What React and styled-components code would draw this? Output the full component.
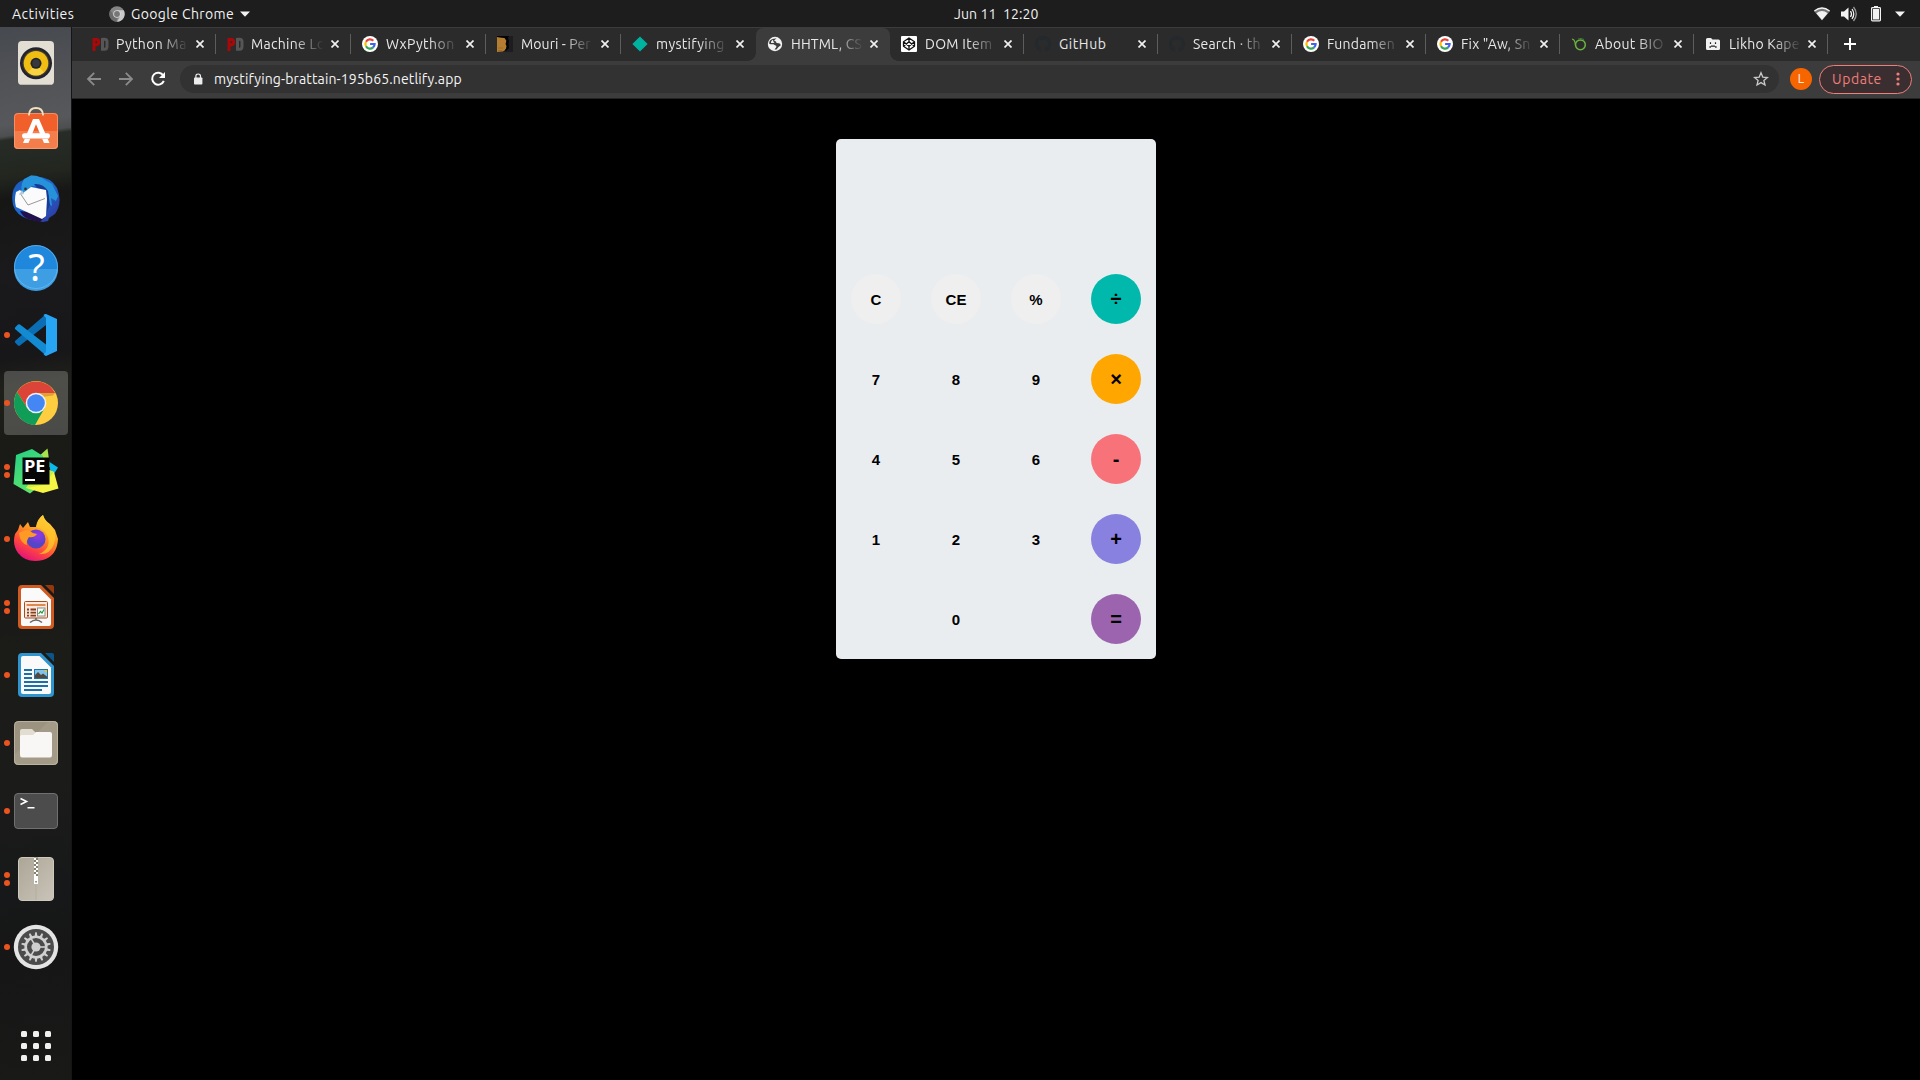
import React from "react";
import styled, { createGlobalStyle } from "styled-components";

const GlobalStyle = createGlobalStyle`
  * { box-sizing: border-box; }
  body { margin: 0; background: #000; overflow: hidden; }
  svg { display: block; flex: none; }
`;

const Desktop = styled.div`
  width: 1920px;
  height: 1080px;
  display: flex;
  flex-direction: column;
  background: #000;
  color: #f2f2f2;
  font-family: Ubuntu, "Noto Sans", sans-serif;
  font-size: 14px;
`;

/* ---------- top panel ---------- */
const TopPanel = styled.header`
  height: 27px;
  flex: none;
  display: grid;
  grid-template-columns: 942px auto 1fr;
  align-items: center;
  padding: 0 15px 0 12px;
  background: #1d1d1d;
`;
const PanelGroup = styled.div`
  display: flex;
  align-items: center;
  justify-content: ${(p) => (p.$end ? "flex-end" : "flex-start")};
`;
const PanelText = styled.span`
  width: ${(p) => p.$w}px;
  white-space: pre;
  line-height: 26px;
  letter-spacing: ${(p) => p.$ls || 0}px;
`;
const AppMenu = styled.div`
  display: flex;
  align-items: center;
  margin-left: 35px;
  gap: 6px;
`;
const StatusIcons = styled(PanelGroup)`
  gap: 10.67px;
`;

/* ---------- body ---------- */
const Body = styled.div`
  flex: 1;
  display: flex;
  min-height: 0;
`;
const Dock = styled.nav`
  width: 72px;
  flex: none;
  display: flex;
  flex-direction: column;
  padding: 4px 0 0 4px;
  border-right: 1px solid #151515;
  background:
    linear-gradient(172deg, #46494f 0, #505256 50px, #57585b 98px, #4c4e4f 109px, #282c27 113px, #22261f 150px, #161615 172px, #1a1a1c 240px, #171719 330px, #20201a 360px, #1a1a17 410px, #191918 560px, #1b1b18 620px, #1b1b1a 760px, #171819 860px, #161616 930px, #191918 1053px);
`;
const DockTile = styled.div`
  width: 64px;
  height: 64px;
  margin: 0 0 4px;
  flex: none;
  display: flex;
  align-items: center;
  gap: 2px;
  border-radius: 4px;
  background: ${(p) => (p.$active ? "rgba(255,255,255,0.21)" : "transparent")};
`;
const DockDots = styled.div`
  width: 6px;
  display: flex;
  flex-direction: column;
  gap: 2.5px;
`;
const DockDot = styled.i`
  width: 6px;
  height: 6px;
  border-radius: 50%;
  background: #e95420;
`;
const AppGrid = styled.div`
  display: grid;
  grid-template-columns: repeat(3, 6px);
  gap: 6px;
  margin: 48px 0 0 17px;
`;
const AppGridCell = styled.i`
  height: 6px;
  border-radius: 1.5px;
  background: #f1f1f0;
`;

/* ---------- browser ---------- */
const Browser = styled.main`
  flex: 1;
  display: flex;
  flex-direction: column;
  min-width: 0;
`;
const TabStrip = styled.div`
  height: 34px;
  flex: none;
  display: flex;
  padding-left: 9px;
  border-top: 1px solid #3c3c3c;
  background: #2b2b2b;
`;
const Tab = styled.div`
  width: ${(p) => p.$w}px;
  flex: none;
  display: flex;
  align-items: center;
  padding: 0 0 1px 11px;
  background: ${(p) => (p.$active ? "#3c3c3c" : "transparent")};
  border-radius: ${(p) => (p.$active ? "7px 7px 0 0" : "0")};
`;
const TabCorner = styled.i`
  align-self: flex-end;
  width: 8px;
  height: 8px;
  flex: none;
  margin-bottom: -1px;
  ${(p) =>
    p.$right
      ? "margin-left: auto; margin-right: -8px; background: radial-gradient(circle at 100% 0, transparent 7.5px, #3c3c3c 8px);"
      : "margin-left: -19px; margin-right: 11px; background: radial-gradient(circle at 0 0, transparent 7.5px, #3c3c3c 8px);"}
`;
const Favicon = styled.span`
  width: 16px;
  height: 16px;
  flex: none;
`;
const TabTitle = styled.span`
  width: 74px;
  margin-left: 8px;
  flex: none;
  white-space: nowrap;
  line-height: 20px;
  color: #e8e8e8;
  letter-spacing: ${(p) => p.$ls ?? 0.35}px;
  mask-image: ${(p) => (p.$full ? "none" : "linear-gradient(90deg, #000 58%, transparent 98%)")};
`;
const TabClose = styled.span`
  margin-left: ${(p) => (p.$tight ? 5 : 6)}px;
`;
const TabRule = styled.i`
  width: 1px;
  height: 20px;
  margin-left: auto;
  background: ${(p) => (p.$hidden ? "transparent" : "#5d5d5d")};
`;
const NewTab = styled.div`
  display: flex;
  align-items: center;
  padding: 0 0 1px 16px;
`;
const Toolbar = styled.div`
  height: 38px;
  flex: none;
  display: flex;
  align-items: center;
  padding: 0 8px 1px 14px;
  background: #3c3c3c;
  border-bottom: 1px solid #242424;
`;
const NavButton = styled.span`
  width: 16px;
  margin-right: 16px;
`;
const Omnibox = styled.div`
  flex: 1;
  height: 28px;
  margin-left: -2px;
  display: flex;
  align-items: center;
  padding: 0 10px 0 13px;
  border-radius: 14px;
  background: #323232;
`;
const Address = styled.span`
  flex: 1;
  margin-left: 11px;
  line-height: 28px;
  color: #f5f5f5;
  letter-spacing: 0.14px;
`;
const Avatar = styled.span`
  width: 22px;
  height: 22px;
  margin: 0 7px 0 11px;
  border-radius: 50%;
  background: #f66500;
  color: #ffe9dc;
  font: 12px/22px Roboto, sans-serif;
  text-align: center;
`;
const UpdateButton = styled.div`
  width: 93px;
  height: 29px;
  display: flex;
  align-items: center;
  justify-content: space-between;
  padding: 0 11px 0 12px;
  border: 1px solid #ee7f79;
  border-radius: 15px;
  background: #3b2e31;
  color: #ee7f79;
  letter-spacing: 0.6px;
`;

/* ---------- calculator ---------- */
const Page = styled.section`
  flex: 1;
  display: flex;
  justify-content: center;
  align-items: flex-start;
  padding-top: 40px;
  background: #000;
`;
const Calculator = styled.div`
  width: 320px;
  height: 520px;
  border-radius: 5px;
  background: #e9edf0;
  overflow: hidden;
`;
const Display = styled.div`
  height: 120px;
`;
const Keypad = styled.div`
  display: grid;
  grid-template-columns: repeat(4, 50px);
  gap: 30px;
  padding: 15px;
`;
const Key = styled.button`
  width: 50px;
  height: 50px;
  padding: 0;
  border: 0;
  border-radius: 50%;
  background: ${(p) => p.$bg || "transparent"};
  color: #000;
  font: bold ${(p) => (p.$op ? 20 : 15)}px "Liberation Sans", Arial, sans-serif;
`;

/* ---------- small icons ---------- */
const CloseIcon = () => (
  <svg width="8" height="8" viewBox="0 0 8 8" stroke="#f0f0f0" strokeWidth="1.7"><path d="M.5.5l7 7M7.5.5l-7 7" /></svg>
);
const GoogleIcon = () => (
  <svg width="16" height="16" viewBox="0 0 16 16" fill="none" strokeWidth="2.2">
    <circle cx="8" cy="8" r="8" fill="#fff" />
    <path d="M4 5.7A4.6 4.6 0 0 1 11.3 4.8" stroke="#ea4335" />
    <path d="M4 10.3A4.8 4.8 0 0 1 4 5.7" stroke="#fbbc05" />
    <path d="M11.1 11.4A4.6 4.6 0 0 1 4 10.3" stroke="#34a853" />
    <path d="M8.1 8H12.6A4.6 4.6 0 0 1 11.1 11.4" stroke="#4263eb" />
  </svg>
);
const PDIcon = () => (
  <svg width="17" height="16" viewBox="0 0 17 16" fill="none" strokeWidth="3">
    <path d="M2 15V3.5H4.7Q6.7 3.5 6.7 6T4.7 8.8H2" stroke="#a80808" />
    <path d="M10.5 2V13.2H12.5Q15 13.2 15 10.5V5.700Q15 3.300 12.500 3.300H10.500" stroke="#565656" />
  </svg>
);
const WoodIcon = () => (
  <svg width="16" height="16" viewBox="0 0 16 16">
    <rect width="16" height="16" fill="#1c1c21" />
    <path d="M0 1L6 1.500L9 1L10 4L9 6L10.500 9L9 11L9.500 13L6 15.500L0 16Z" fill="#b47d31" />
    <path d="M1 12H6M1 14.500H5" stroke="#a06c27" />
    <path d="M0 0H12L11 2L12 5L11.500 8L12 12L9 15L8 14L10 11L8.500 8L9.500 5L7.500 2L0 1Z" fill="#040404" />
  </svg>
);
const DiamondIcon = () => (
  <svg width="16" height="16" viewBox="0 0 16 16"><path d="M8 .4L15.600 8L8 15.600L.4 8Z" fill="#00b3a1" /></svg>
);
const GlobeIcon = () => (
  <svg width="16" height="16" viewBox="0 0 16 16">
    <circle cx="8" cy="8" r="7.200" fill="#f2f2f2" />
    <path d="M9.500 2.500L7.200 4.200Q7.400 5.300 9 5.400L9.500 7L12 7.200Q14 7.600 13.600 9.500L11.500 11L9.500 13.600H7.500L9.400 11Q9.600 9.600 8 9.300L6.500 8.200Q4 8.400 2.200 7.700Q2 6 3 4.600Q5 2.200 9.500 2.500Z" fill="#3c3c3c" />
    <path d="M4.200 5.200L6 3.600L6.300 5.500L7.500 6.500L6 7H4Z" fill="#f2f2f2" />
  </svg>
);
const CodepenIcon = () => (
  <svg width="16" height="16" viewBox="0 0 16 16" fill="none" stroke="#111" strokeWidth="1.3" strokeLinejoin="round">
    <rect width="16" height="16" rx="1" fill="#fff" stroke="none" />
    <path d="M8 2L13.500 5.700V10.300L8 14L2.500 10.300V5.700ZM8 2V5.700M8 10.300V14M2.500 5.700L8 10.300L13.500 5.700M2.500 10.300L8 5.700L13.500 10.300" />
  </svg>
);
const GithubIcon = () => (
  <svg width="16" height="16" viewBox="0 0 16 16" fill="#24292e">
    <path d="M8 0C3.580 0 0 3.580 0 8c0 3.540 2.290 6.530 5.470 7.590.4.070.55-.17.55-.38 0-.19-.01-.82-.01-1.490-2.010.37-2.530-.49-2.690-.94-.09-.23-.48-.94-.82-1.130-.28-.15-.68-.52-.01-.53.63-.01 1.080.58 1.230.82.72 1.210 1.870.87 2.330.66.07-.52.28-.87.51-1.070-1.780-.2-3.640-.89-3.640-3.950 0-.87.31-1.590.82-2.150-.08-.2-.36-1.020.08-2.120 0 0 .67-.21 2.200.82.64-.18 1.320-.27 2-.27s1.360.09 2 .27c1.530-1.040 2.200-.82 2.200-.82.44 1.100.16 1.920.08 2.120.51.56.82 1.270.82 2.150 0 3.070-1.870 3.750-3.650 3.950.29.25.54.73.54 1.480 0 1.070-.01 1.930-.01 2.200 0 .21.15.46.55.38A8.010 8.010 0 0 0 16 8c0-4.420-3.580-8-8-8z" />
  </svg>
);
const BioIcon = () => (
  <svg width="16" height="16" viewBox="0 0 16 16" fill="none" stroke="#6bb53e" strokeWidth="1.500">
    <circle cx="9.400" cy="8.800" r="4.900" />
    <path d="M1 3Q3.500 3.400 4 6.500Q4.200 8 4.500 9" strokeWidth="1.200" /><path d="M7 3Q10 1.800 13 3.500" strokeWidth="1" stroke="#3f7d3d" />
  </svg>
);
const SadIcon = () => (
  <svg width="16" height="16" viewBox="0 0 16 16">
    <path d="M1 3.500Q1 2 2.500 2H6L7.500 3.500H13.500Q15 3.500 15 5V12.500Q15 14 13.500 14H2.500Q1 14 1 12.500Z" fill="#f1f1f1" />
    <path d="M5.500 6.300V8M10.500 6.300V8M5 11.800V10.800H6M6 10.200H10M10 10.800H11V11.800" stroke="#222" strokeWidth="1.200" fill="none" />
  </svg>
);
const TinyChrome = () => (
  <svg width="16" height="16" viewBox="0 0 16 16">
    <circle cx="8" cy="8" r="7.700" fill="#858585" />
    <path d="M8 4.300H14.700A7.700 7.700 0 0 1 8 15.700L11.300 9.800Z" fill="#c9c9c9" />
    <path d="M1.300 4.200L5 10L8 12L7.700 15.700A7.700 7.700 0 0 1 1.300 4.200Z" fill="#6c6c6c" />
    <circle cx="8" cy="8" r="3.800" fill="#d8d8d8" /><circle cx="8" cy="8" r="2.900" fill="#777" />
  </svg>
);
const Triangle = () => (
  <svg width="10" height="6" viewBox="0 0 10 6"><path d="M0 .5H10L5 5.800Z" fill="#f2f2f2" /></svg>
);

/* ---------- dock icons ---------- */
const Art = ({ children }) => <svg width="48" height="48" viewBox="0 0 48 48">{children}</svg>;

const Rhythmbox = () => (
  <Art>
    <rect x="6" y="2" width="36" height="44" rx="4" fill="#e2ded3" />
    <path d="M8 45.500H40" stroke="#bdb9ac" />
    <circle cx="24" cy="24.300" r="16" fill="#23232d" />
    <circle cx="24" cy="24.300" r="13.500" fill="#403c32" />
    <circle cx="24" cy="24.300" r="12.300" fill="#f0bd13" />
    <path d="M16 33.500A12.300 12.300 0 0 0 32 33.500L27 28H21Z" fill="#fbd84e" opacity=".8" />
    <circle cx="24" cy="24.300" r="5.500" fill="#22242a" /><circle cx="24" cy="24.300" r="3.800" fill="#35383c" />
  </Art>
);
const Software = () => (
  <Art>
    <rect x="2" y="6" width="44" height="36" rx="4" fill="#f15f2a" />
    <path d="M2 24H46V38Q46 42 42 42H6Q2 42 2 38Z" fill="#f47d4c" />
    <rect x="2.500" y="6.500" width="43" height="35" rx="3.500" fill="none" stroke="#f8a27c" strokeOpacity=".7" />
    <path d="M17 8.500V7.500Q17.500 1 24 1T31 7.500V8.500" fill="none" stroke="#f4e0bb" strokeWidth="1.800" />
    <path d="M21 12H27L37.500 36H32L24 17.200L16.500 36H11Z" fill="#fff" />
    <path d="M12.500 28.800H35.500" stroke="#fff" strokeWidth="5" strokeLinecap="round" />
    <path d="M11 31.500H37" stroke="#f7c4af" strokeWidth=".8" />
  </Art>
);
const Thunderbird = () => (
  <Art>
    <defs><linearGradient id="tb" x1="0" y1="0" x2="1" y2="1"><stop offset="0" stopColor="#1b57b8" /><stop offset=".5" stopColor="#1f6bd0" /><stop offset="1" stopColor="#31309a" /></linearGradient></defs>
    <path d="M13 4L19 .5L24 1.500Q39 2 45 13Q51 28 43 39L37 43L36 46L31 47L16 44Q4 40 1 30Q-2 14 7 7Z" fill="url(#tb)" />
    <path d="M8 36Q20 37 32 43L28 47L16 44Q10 41 8 36Z" fill="#20104c" />
    <path d="M12 4L19 .5Q27 0 33 5L40 9L46 21L44 26L39 23L40 31L35 28L37 21Q31 9 20 11L10 19Q8 11 12 4Z" fill="#2692da" />
    <path d="M22 9Q31 8 36 16L38 30L34 39L33 22Z" fill="#173b94" />
    <path d="M4 17L8 15L11 18L19 12L34 15L35 24L34 41L30 44L4 32Q2 25 4 17Z" fill="#fbfbfb" />
    <path d="M8 18L16 30L33 23.500" fill="none" stroke="#999" />
    <path d="M10 15L7 20L12 19Z" fill="#b3cbd8" /><circle cx="13.500" cy="14" r="1.400" fill="#333" />
  </Art>
);
const Help = () => (
  <Art>
    <circle cx="24" cy="24" r="22" fill="#1f87dc" />
    <path d="M2 26H46A22 22 0 0 1 2 26Z" fill="#3d9ee4" />
    <circle cx="24" cy="24" r="21.500" fill="none" stroke="#72bcf0" strokeOpacity=".7" />
    <text x="24.500" y="37.500" textAnchor="middle" fontFamily="Noto Sans, sans-serif" fontSize="38" fill="#fff">?</text>
  </Art>
);
const VSCode = () => (
  <Art>
    <path d="M3 30Q2.500 31 3.500 32L6 34.500Q7 35 8 34.500L34 14V3Z" fill="#0b6eb5" />
    <path d="M3 18Q2.500 17 3.500 16L6 13.500Q7 13 8 13.500L34 33.500V44.500Z" fill="#128bd2" />
    <path d="M34 3L45 8V40L34 45Q33 45 31.500 43L34 41Z" fill="#27a5f2" />
    <path d="M34 3Q33 2.500 31.500 4L34 7Z" fill="#27a5f2" />
  </Art>
);
const Chrome = () => (
  <Art>
    <circle cx="24" cy="24" r="22" fill="#ffcd40" />
    <path d="M5 13A22 22 0 0 1 43.100 14H24L15.300 29Z" fill="#dc4437" />
    <path d="M5 13A22 22 0 0 0 23 46L32.700 29L24 34L15.300 29Z" fill="#109d58" />
    <path d="M24 14H43L41 16.500L30 18Z" fill="#a3512b" opacity=".35" />
    <circle cx="24" cy="24" r="10.300" fill="#f1f1f1" /><circle cx="24" cy="24" r="8.800" fill="#4486f4" />
  </Art>
);
const PyCharmEdu = () => (
  <Art>
    <defs><linearGradient id="pe" x1="0" y1="0" x2=".5" y2="1"><stop offset="0" stopColor="#23cf86" /><stop offset="1" stopColor="#5ee56c" /></linearGradient></defs>
    <path d="M36 14L46 20.500L40 30Z" fill="#0cb8ec" />
    <path d="M26 10L35.500 1.500L38 20H26Z" fill="#a9e34b" />
    <path d="M4 8L20 2L31 9V36L18 46.500L1.500 37Z" fill="url(#pe)" />
    <path d="M37 23L42 25L46.500 41.500L31 46L14 41L22 30Z" fill="#f4f545" />
    <path d="M14 41L18 36H38V30L42 25L37 23V37Z" fill="#c9ef46" />
    <rect x="10.500" y="10.500" width="27" height="27" fill="#060606" />
    <text x="12" y="25.300" fontFamily="Open Sans, sans-serif" fontWeight="700" fontSize="16" textLength="21.500" lengthAdjust="spacingAndGlyphs" fill="#fff">PE</text>
    <rect x="13" y="32" width="10" height="2" fill="#fff" />
  </Art>
);
const Firefox = () => (
  <Art>
    <defs>
      <linearGradient id="ff" x1=".8" y1="0" x2=".3" y2="1"><stop offset="0" stopColor="#fff04a" /><stop offset=".4" stopColor="#ff9a22" /><stop offset=".7" stopColor="#ff4a3c" /><stop offset="1" stopColor="#e5107c" /></linearGradient>
      <radialGradient id="fp" cx=".6" cy=".3"><stop offset="0" stopColor="#9a35e8" /><stop offset="1" stopColor="#5545c8" /></radialGradient>
    </defs>
    <path d="M8 9L11 13L16 7L18 12H24Q25 4 31 0Q33 6 38 9L43 15L46 24Q45 41 31 45Q15 49 6 38Q0 30 3 19L6 15Z" fill="url(#ff)" />
    <path d="M24 12Q26 4 31 0Q32 6 38 10Q46 18 42 29Q38 40 27 39Q39 34 36 22Q33 14 24 12Z" fill="#ffc52d" opacity=".8" />
    <circle cx="24" cy="24" r="9.500" fill="url(#fp)" />
    <path d="M7 18Q13 14 18 16Q21 19 25 19Q22 23 17 22Q14 26 15 30Q8 28 7 18Z" fill="#ff9b24" />
  </Art>
);
const OfficePage = ({ edge, fold, children }) => (
  <Art>
    <path d="M10 2H29L42 15V42Q42 46 38 46H10Q6 46 6 42V6Q6 2 10 2Z" fill={edge} />
    <path d="M11 5H27.500L39 16.500V41Q39 43 37 43H11Q9 43 9 41V7Q9 5 11 5Z" fill="#fafafa" />
    <path d="M33 2H40Q42 2 42 4V11Z" fill={fold} />
    {children}
  </Art>
);
const Impress = () => (
  <OfficePage edge="#cf5a22" fold="#95380c">
    <rect x="12.500" y="18.500" width="23" height="16.500" rx="1" fill="#f9e9df" stroke="#a74b1c" />
    <path d="M14.500 22H33.500" stroke="#e0884f" strokeWidth="2" />
    <path d="M15 26.500H17M15 29.700H17M15 32.700H17M18.500 26.500H24M18.500 29.700H24M18.500 32.700H24" stroke="#873d1a" strokeWidth="1.800" />
    <rect x="25.500" y="25" width="7.500" height="8" fill="#fff" stroke="#888" /><path d="M26.500 31L28.500 28.500L30 30L32 26.500" fill="none" stroke="#259d33" strokeWidth="1.200" />
    <path d="M24 35V37M18 39.500Q24 34.500 30 39.500" fill="none" stroke="#666" strokeWidth="1.600" />
  </OfficePage>
);
const Writer = () => (
  <OfficePage edge="#2f95cf" fold="#0b5688">
    <path d="M12 19H20M12 23H20M12 27H20M12 31H36M12 35H36M12 39H30" stroke="#1b70a8" strokeWidth="1.800" />
    <rect x="22.500" y="18.500" width="13" height="9" fill="#80c4ec" stroke="#23729f" />
    <path d="M23 27V24L26 21L29 24L31 22.500L35 25.500V27Z" fill="#4e4a42" /><path d="M32 19H35V22Z" fill="#f3c31c" />
  </OfficePage>
);
const Files = () => (
  <Art>
    <rect x="2" y="2" width="44" height="44" rx="4.500" fill="#9b9280" />
    <path d="M2 36L37 2H41.500Q46 2 46 6.500V41.500Q46 46 41.500 46H6.500Q2 46 2 41.500Z" fill="#a39a87" />
    <rect x="2.500" y="2.500" width="43" height="43" rx="4" fill="none" stroke="#c5bca8" strokeOpacity=".7" />
    <path d="M8 12Q8 10 10 10H20L24 14V20H8Z" fill="#e3ddd1" />
    <path d="M8 18Q8 16 10 16H21L24 13H38Q40 13 40 15V36Q40 38.500 38 38.500H10Q8 38.500 8 36Z" fill="#f8f7f5" />
  </Art>
);
const Terminal = () => (
  <Art>
    <rect x="2.500" y="6.500" width="43" height="35" rx="3.500" fill="#4c4c4c" stroke="#707070" />
    <path d="M8.500 11.500L14.500 14.500L8.500 17.500M15.500 20.700H22.500" fill="none" stroke="#fff" strokeWidth="1.600" />
  </Art>
);
const Archive = () => (
  <Art>
    <defs><linearGradient id="ar" x1="0" y1="0" x2="1" y2="1"><stop offset="0" stopColor="#aca697" /><stop offset="1" stopColor="#c9c4b8" /></linearGradient></defs>
    <rect x="6.500" y="2.500" width="35" height="43" rx="3.500" fill="url(#ar)" stroke="#cdc8bc" />
    <path d="M24 3V45" stroke="#b3ad9e" />
    <rect x="22" y="2.500" width="4" height="20" fill="#85806f" />
    <path d="M23 3V22" stroke="#fff" strokeWidth="2" strokeDasharray="2 2" /><path d="M25 5V22" stroke="#fff" strokeWidth="2" strokeDasharray="2 2" />
    <rect x="22" y="21" width="4" height="8" fill="#fff" /><rect x="23.300" y="26" width="1.500" height="1.500" fill="#777" />
  </Art>
);
const gearSpokes = [0, 120, 240];
const gearTeeth = Array.from({ length: 14 }, (_, i) => (i * 360) / 14);
const Settings = () => (
  <Art>
    <circle cx="24" cy="24" r="22.200" fill="#e4e4e4" />
    <circle cx="24" cy="24" r="18" fill="#4b4b4b" />
    <circle cx="24" cy="24" r="10.300" fill="none" stroke="#d0d0d0" strokeWidth="2.600" />
    {gearTeeth.map((a) => <path key={a} d="M22.600 13.500L23.200 9.200H24.800L25.400 13.500Z" fill="#d0d0d0" transform={`rotate(${a} 24 24)`} />)}
    <circle cx="24" cy="24" r="4.600" fill="#cfcfcf" />
    {gearSpokes.map((a) => <path key={a} d="M24 24H34" stroke="#cfcfcf" strokeWidth="1.600" transform={`rotate(${a} 24 24)`} />)}
  </Art>
);

const dockItems = [
  [Rhythmbox, 0], [Software, 0], [Thunderbird, 0], [Help, 0], [VSCode, 1], [Chrome, 1, true], [PyCharmEdu, 2],
  [Firefox, 1], [Impress, 2], [Writer, 1], [Files, 1], [Terminal, 1], [Archive, 2], [Settings, 1],
];

const tabs = [
  { icon: PDIcon, title: "Python Ma", w: 135 },
  { icon: PDIcon, title: "Machine Lo", w: 135, ls: 0.3 },
  { icon: GoogleIcon, title: "WxPython", w: 135, ls: 0.45 },
  { icon: WoodIcon, title: "Mouri - Per", w: 135, ls: 0.1 },
  { icon: DiamondIcon, title: "mystifying", w: 135, noRule: true, ls: 0.3 },
  { icon: GlobeIcon, title: "HHTML, CS", w: 134, active: true, noRule: true, ls: 0.15 },
  { icon: CodepenIcon, title: "DOM Item", w: 134, ls: 0.3 },
  { icon: GithubIcon, title: "GitHub", w: 134, full: true, ls: 0.55 },
  { icon: GithubIcon, title: "Search · th", w: 134, ls: 0.2 },
  { icon: GoogleIcon, title: "Fundamen", w: 134, ls: 0.2 },
  { icon: GoogleIcon, title: 'Fix "Aw, Sn', w: 134, ls: 0.2 },
  { icon: BioIcon, title: "About BIO", w: 134, ls: 0.35 },
  { icon: SadIcon, title: "Likho Kape", w: 134, ls: 0.2 },
];

const keys = [
  { t: "C", bg: "#efefef" }, { t: "CE", bg: "#efefef" }, { t: "%", bg: "#efefef" }, { t: "÷", bg: "#00b9ac", op: true },
  { t: "7" }, { t: "8" }, { t: "9" }, { t: "×", bg: "#ffa600", op: true },
  { t: "4" }, { t: "5" }, { t: "6" }, { t: "-", bg: "#f8727a", op: true },
  { t: "1" }, { t: "2" }, { t: "3" }, { t: "+", bg: "#8981e0", op: true },
  { t: "" }, { t: "0" }, { t: "" }, { t: "=", bg: "#9c64af", op: true },
];

export default function App() {
  return (
    <Desktop>
      <GlobalStyle />
      <TopPanel>
        <PanelGroup>
          <PanelText $w={62} $ls={0.5}>Activities</PanelText>
          <AppMenu>
            <TinyChrome />
            <PanelText $w={103} $ls={0.38}>Google Chrome</PanelText>
            <Triangle />
          </AppMenu>
        </PanelGroup>
        <PanelText $w={86} $ls={0.1}>{"Jun 11  12:20"}</PanelText>
        <StatusIcons $end>
          <svg width="16" height="14" viewBox="0 0 16 14"><path d="M0 4Q8-2.500 16 4L8 13.500Z" fill="#777" /><path d="M.4 4Q8-2 15.600 4" fill="none" stroke="#f2f2f2" strokeWidth="1.300" /><path d="M2.300 6.200Q8 2 13.700 6.200L8 13Z" fill="#f2f2f2" /></svg>
          <svg width="17" height="16" viewBox="0 0 17 16" fill="none" stroke="#f2f2f2" strokeWidth="1.300"><path d="M0 5.500H3L7.500 1.500V14.500L3 10.500H0Z" fill="#f2f2f2" stroke="none" /><path d="M9.500 5Q11.500 8 9.500 11M11 3Q14.500 8 11 13" /><path d="M12.500 1Q18 8 12.500 15" stroke="#999" /></svg>
          <svg width="16" height="16" viewBox="0 0 16 16"><path d="M6 0H10V1.500H6Z" fill="#f2f2f2" /><rect x="3.600" y="1.600" width="8.800" height="13.300" rx=".8" fill="none" stroke="#f2f2f2" strokeWidth="1.200" /><rect x="5" y="3" width="6" height="10.500" fill="#f2f2f2" /></svg>
          <Triangle />
        </StatusIcons>
      </TopPanel>
      <Body>
        <Dock>
          {dockItems.map(([Icon, dots, active], i) => (
            <DockTile key={i} $active={active}>
              <DockDots>{Array.from({ length: dots }, (_, d) => <DockDot key={d} />)}</DockDots>
              <Icon />
            </DockTile>
          ))}
          <AppGrid>{Array.from({ length: 9 }, (_, i) => <AppGridCell key={i} />)}</AppGrid>
        </Dock>
        <Browser>
          <TabStrip>
            {tabs.map(({ icon: Icon, title, w, active, noRule, full, ls }, i) => (
              <Tab key={i} $w={w} $active={active}>
                {active && <TabCorner />}
                <Favicon><Icon /></Favicon>
                <TabTitle $full={full} $ls={ls}>{title}</TabTitle>
                <TabClose $tight={w === 134}><CloseIcon /></TabClose>
                {active ? <TabCorner $right /> : <TabRule $hidden={noRule} />}
              </Tab>
            ))}
            <NewTab>
              <svg width="12" height="12" viewBox="0 0 12 12" stroke="#fff" strokeWidth="2"><path d="M6 0V12M0 6H12" /></svg>
            </NewTab>
          </TabStrip>
          <Toolbar>
            <NavButton><svg width="16" height="16" viewBox="0 0 16 16" fill="none" stroke="#8b8b8b" strokeWidth="1.800"><path d="M15 8H2.500M8.200 1.800L2 8L8.200 14.200" /></svg></NavButton>
            <NavButton><svg width="16" height="16" viewBox="0 0 16 16" fill="none" stroke="#8b8b8b" strokeWidth="1.800"><path d="M1 8H13.500M7.800 1.800L14 8L7.800 14.200" /></svg></NavButton>
            <NavButton><svg width="16" height="16" viewBox="0 0 16 16" fill="none" stroke="#fff" strokeWidth="2"><path d="M13.300 4.500A6 6 0 1 0 13.800 9.800" /><path d="M15 1V7H9Z" fill="#fff" stroke="none" /></svg></NavButton>
            <Omnibox>
              <svg width="10" height="12" viewBox="0 0 10 12"><rect x="1" y="4.500" width="8.400" height="7" rx=".8" fill="#ededed" /><path d="M2.900 5V3.200Q2.900 1 5.200 1T7.500 3.200V5" fill="none" stroke="#ededed" strokeWidth="1.200" /></svg>
              <Address>mystifying-brattain-195b65.netlify.app</Address>
              <svg width="16" height="16" viewBox="0 0 16 16" fill="none" stroke="#c9c9c9" strokeWidth="1.300"><path d="M8 1.800L9.800 6.100L14.400 6.500L10.900 9.500L12 14L8 11.600L4 14L5.100 9.500L1.600 6.500L6.200 6.100Z" /></svg>
            </Omnibox>
            <Avatar>L</Avatar>
            <UpdateButton>
              Update
              <svg width="4" height="14" viewBox="0 0 4 14" fill="#ee7f79"><circle cx="2" cy="2" r="1.600" /><circle cx="2" cy="7" r="1.600" /><circle cx="2" cy="12" r="1.600" /></svg>
            </UpdateButton>
          </Toolbar>
          <Page>
            <Calculator>
              <Display />
              <Keypad>
                {keys.map(({ t, bg, op }, i) => <Key key={i} $bg={bg} $op={op}>{t}</Key>)}
              </Keypad>
            </Calculator>
          </Page>
        </Browser>
      </Body>
    </Desktop>
  );
}
